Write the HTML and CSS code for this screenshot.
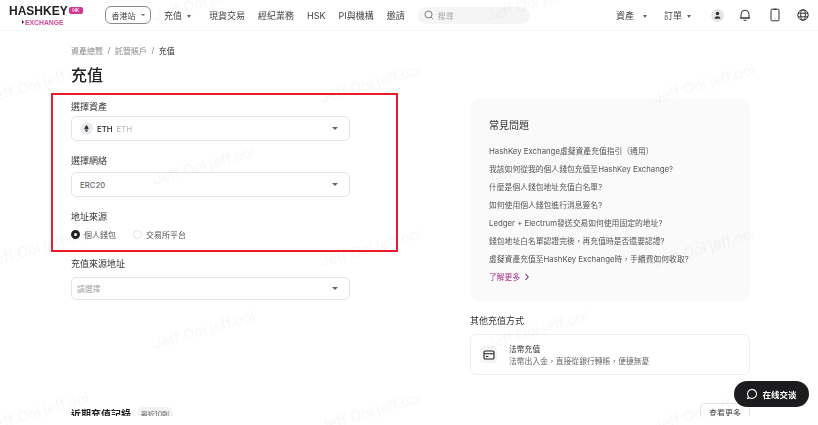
FILE: index.html
```html
<!DOCTYPE html>
<html>
<head>
  <meta charset="utf-8">
  <title>充值</title>
  <link rel="stylesheet" href="styles.css">
</head>
<body>
  <div class="page">
    <header class="topbar">
      <div class="logo">
        <div class="logo-main">HASHKEY<span class="logo-hk">HK</span></div>
        <div class="logo-sub"><span class="logo-arrow"></span>EXCHANGE</div>
      </div>
      <button class="site-btn">香港站<span class="caret caret-small"></span></button>
      <nav class="nav">
        <a class="nav-item nav-first">充值<span class="caret"></span></a>
        <a class="nav-item">現貨交易</a>
        <a class="nav-item">經紀業務</a>
        <a class="nav-item">HSK</a>
        <a class="nav-item">PI與機構</a>
        <a class="nav-item">邀請</a>
      </nav>
      <div class="search">
        <svg class="search-icon" viewBox="0 0 12 12" width="10" height="10"><circle cx="5.4" cy="5.4" r="4.2"/><path d="M8.6 8.6l2 2"/></svg>
        <span>搜尋</span>
      </div>
      <div class="top-right">
        <a class="nav-item">資產<span class="caret caret-wide"></span></a>
        <a class="nav-item nav-orders">訂單<span class="caret"></span></a>
        <span class="avatar">
          <svg viewBox="0 0 14 14" width="13" height="13"><circle cx="7" cy="4.8" r="1.9"/><path d="M3.9 10.4c0-1.7 1.4-2.5 3.1-2.5s3.1.8 3.1 2.5z"/></svg>
        </span>
        <svg class="top-icon" viewBox="0 0 14 14" width="14" height="14"><path d="M3 10V6.2a4 4 0 0 1 8 0V10zM1.9 10h10.2M5.6 12.3h2.8"/></svg>
        <svg class="top-icon" viewBox="0 0 14 14" width="14" height="14"><rect x="3" y="1.2" width="8" height="11.6" rx="1"/><path d="M5.6 1.2h2.8M6.8 10.8h.4"/></svg>
        <svg class="top-icon" viewBox="0 0 14 14" width="14" height="14"><circle cx="7" cy="7" r="5.2"/><ellipse cx="7" cy="7" rx="2.3" ry="5.2"/><path d="M2 5.2h10M2 8.8h10"/></svg>
      </div>
    </header>

    <main class="content">
      <section class="left">
        <div class="crumbs">
          <span>資產總覽</span><i>/</i><span>託管賬戶</span><i>/</i><span class="crumb-now">充值</span>
        </div>
        <h1>充值</h1>

        <div class="field field-asset">
          <label>選擇資產</label>
          <div class="select">
            <span class="coin">
              <svg viewBox="0 0 10 10" width="9" height="9"><path d="M5 .8L2.4 5 5 6.5 7.6 5zM2.6 5.8L5 9.2l2.4-3.4L5 7.2z"/></svg>
            </span>
            <span class="coin-name">ETH</span><span class="coin-sub">ETH</span>
            <span class="caret select-caret"></span>
          </div>
        </div>

        <div class="field field-network">
          <label>選擇網絡</label>
          <div class="select"><span class="select-val">ERC20</span><span class="caret select-caret"></span></div>
        </div>

        <div class="field field-source">
          <label>地址來源</label>
          <div class="radios">
            <span class="radio radio-on"></span><span class="radio-text">個人錢包</span>
            <span class="radio radio-off"></span><span class="radio-text">交易所平台</span>
          </div>
        </div>

        <div class="field field-address">
          <label>充值來源地址</label>
          <div class="select select-short"><span class="select-ph">請選擇</span><span class="caret select-caret"></span></div>
        </div>

        <div class="recent">
          <h2>近期充值記錄</h2>
          <span class="pill">最近10則</span>
        </div>
      </section>

      <aside class="right">
        <div class="faq">
          <h3>常見問題</h3>
          <ul>
            <li>HashKey Exchange虛擬資產充值指引（通用）</li>
            <li>我該如何從我的個人錢包充值至HashKey Exchange?</li>
            <li>什麼是個人錢包地址充值白名單?</li>
            <li>如何使用個人錢包進行消息簽名?</li>
            <li>Ledger + Electrum發送交易如何使用固定的地址?</li>
            <li>錢包地址白名單認證完後，再充值時是否還要認證?</li>
            <li>虛擬資產充值至HashKey Exchange時，手續費如何收取?</li>
            <li class="faq-more">了解更多
              <svg viewBox="0 0 8 10" width="6" height="8"><path d="M2 1l3.6 4L2 9"/></svg>
            </li>
          </ul>
        </div>

        <div class="other-title">其他充值方式</div>
        <div class="other-card">
          <span class="other-icon">
            <svg viewBox="0 0 14 12" width="12" height="10"><rect x="1" y="1.2" width="12" height="9.6" rx="1.6"/><path d="M1 4.4h12M3.2 7.8h3"/></svg>
          </span>
          <div class="other-text">
            <div>法幣充值</div>
            <div class="other-sub">法幣出入金，直接從銀行轉賬，便捷無憂</div>
          </div>
        </div>

        <div class="more-row"><button class="more-btn">查看更多</button></div>
      </aside>
    </main>

    <div class="red-box"></div>

    <button class="chat">
      <svg viewBox="0 0 14 14" width="12" height="12"><path d="M7 1.6a5.3 5.3 0 1 1-2.6 9.9L2 12.2l.7-2.3A5.3 5.3 0 0 1 7 1.6z"/></svg>
      在线交谈
    </button>

    <svg class="watermark" width="818" height="425">
      <defs>
        <pattern id="wm" x="100" y="30" width="333" height="164" patternUnits="userSpaceOnUse">
          <text transform="translate(55 155) rotate(-16)">Jeff Ooi jeff.ooi</text>
          <text transform="translate(222 73) rotate(-16)">Jeff Ooi jeff.ooi</text>
        </pattern>
      </defs>
      <rect width="818" height="425" fill="url(#wm)"/>
    </svg>
  </div>
</body>
</html>
```

FILE: styles.css
```css
* {
  margin: 0;
  padding: 0;
  box-sizing: border-box;
}

html, body {
  height: 425px;
  overflow: hidden;
  background: #fff;
}

body {
  font-family: Inter, "Noto Sans CJK TC", sans-serif;
  font-size: 9px;
  color: #333;
}

button {
  font-family: inherit;
  background: none;
}

/* the reference is a soft, resampled capture */
.page {
  position: relative;
  width: 818px;
  height: 425px;
  overflow: hidden;
  filter: blur(.35px);
}

/* top bar */
.topbar {
  display: flex;
  align-items: center;
  height: 31px;
  padding: 0 8px 0 9px;
  border-bottom: 1px solid #f6f6f6;
}

.logo {
  width: 74px;
  margin-top: 1px;
}

.logo-main {
  display: flex;
  align-items: flex-start;
  height: 11px;
  font-family: "Liberation Sans", sans-serif;
  font-size: 12px;
  line-height: 11px;
  font-weight: 700;
  color: #222;
}

.logo-hk {
  width: 15px;
  height: 7px;
  margin-left: 1px;
  margin-top: 1px;
  border-radius: 2px;
  background: #d0358f;
  color: #fbdcee;
  font-size: 5px;
  line-height: 7px;
  text-align: center;
}

.logo-sub {
  display: flex;
  align-items: center;
  margin-top: 2px;
  padding-left: 13px;
  font-family: "Liberation Sans", sans-serif;
  font-size: 6.8px;
  line-height: 7px;
  font-weight: 700;
  color: #d6469b;
}

.logo-arrow {
  width: 0;
  height: 0;
  margin-right: 1px;
  border-left: 2.5px solid #222;
  border-top: 2px solid transparent;
  border-bottom: 2px solid transparent;
}

.site-btn {
  display: flex;
  align-items: center;
  justify-content: center;
  width: 46px;
  height: 18px;
  margin-left: 22px;
  border: 1px solid #8a8a8a;
  border-radius: 6px;
  font-size: 8px;
  color: #444;
}

.caret {
  display: inline-block;
  width: 0;
  height: 0;
  margin-left: 5px;
  border-left: 2.5px solid transparent;
  border-right: 2.5px solid transparent;
  border-top: 3px solid #666;
  vertical-align: middle;
}

.caret-small {
  border-left-width: 2px;
  border-right-width: 2px;
  border-top-width: 2px;
}

.caret-wide {
  margin-left: 9px;
}

.nav {
  display: flex;
  align-items: center;
  margin-left: 13px;
  gap: 13px;
}

.nav-item {
  font-size: 9px;
  color: #444;
  white-space: nowrap;
}

.nav-first {
  margin-right: 5px;
}

.search {
  display: flex;
  align-items: center;
  width: 112px;
  height: 17px;
  margin-left: 13px;
  padding-left: 6px;
  gap: 4px;
  border-radius: 9px;
  background: #f5f5f5;
  color: #aaa;
  font-size: 8px;
}

.search-icon {
  fill: none;
  stroke: #666;
  stroke-width: 1;
}

.top-right {
  display: flex;
  align-items: center;
  margin-left: auto;
}

.nav-orders {
  margin-left: 17px;
}

.avatar {
  display: flex;
  align-items: center;
  justify-content: center;
  width: 13px;
  height: 13px;
  margin-left: 20px;
  border-radius: 50%;
  background: #e6e6e8;
}

.avatar svg {
  fill: #333;
}

.top-icon {
  margin-left: 14px;
  fill: none;
  stroke: #333;
  stroke-width: 1;
}

.top-icon:nth-of-type(2) {
  margin-left: 16px;
}

/* main area, the capture goes white below 416px */
.content {
  display: flex;
  height: 385px;
  overflow: hidden;
  padding-left: 71px;
  gap: 120px;
}

.left {
  width: 279px;
}

.crumbs {
  display: flex;
  align-items: center;
  height: 12px;
  margin-top: 13px;
  font-size: 8px;
  color: #888;
}

.crumbs i {
  margin: 0 4.5px;
  font-style: normal;
}

.crumb-now {
  color: #333;
}

h1 {
  margin-top: 6px;
  height: 26px;
  font-size: 16px;
  line-height: 26px;
  font-weight: 500;
  color: #222;
}

.field label {
  display: block;
  height: 13px;
  font-size: 9px;
  line-height: 13px;
  color: #333;
}

.field-asset {
  margin-top: 12px;
}

.field-network {
  margin-top: 13px;
}

.field-source {
  margin-top: 13px;
}

.field-address {
  margin-top: 17px;
}

.select {
  position: relative;
  display: flex;
  align-items: center;
  height: 25px;
  margin-top: 3px;
  padding-left: 8px;
  border: 1px solid #e4e4e4;
  border-radius: 5px;
  background: #fff;
  font-size: 7.8px;
}

.field-network .select {
  margin-top: 5px;
}

.select-short {
  height: 23px;
  margin-top: 7px;
  padding-left: 5px;
}

.select-caret {
  margin-left: auto;
  margin-right: 11px;
  border-left-width: 3px;
  border-right-width: 3px;
}

.coin {
  display: flex;
  align-items: center;
  justify-content: center;
  width: 13px;
  height: 13px;
  margin-right: 4px;
  border-radius: 50%;
  background: #ececf1;
}

.coin svg {
  fill: #333;
}

.coin-name {
  font-weight: 500;
  color: #222;
}

.coin-sub {
  margin-left: 4px;
  color: #b5b5b5;
}

.select-val {
  color: #555;
}

.select-ph {
  color: #aaa;
}

.radios {
  display: flex;
  align-items: center;
  height: 12px;
  margin-top: 5px;
  font-size: 8px;
  color: #555;
}

.radio {
  width: 9px;
  height: 9px;
  border-radius: 50%;
}

.radio-on {
  border: 3px solid #222;
  background: #fff;
}

.radio-off {
  margin-left: 17px;
  border: 1px solid #e4e4e4;
}

.radio-text {
  margin-left: 4px;
}

.recent {
  display: flex;
  align-items: center;
  margin-top: 107px;
}

h2 {
  font-size: 10px;
  line-height: 14px;
  font-weight: 700;
  color: #222;
}

.pill {
  width: 36px;
  margin-left: 6px;
  padding: 2px 0;
  border-radius: 6px;
  background: #f2f2f2;
  font-size: 7px;
  text-align: center;
  color: #666;
}

/* right column */
.right {
  width: 280px;
}

.faq {
  height: 202px;
  margin-top: 68px;
  padding: 19px 19px 0;
  border-radius: 9px;
  background: #fafafa;
}

h3 {
  font-size: 10px;
  line-height: 14px;
  font-weight: 400;
  color: #333;
}

.faq ul {
  margin-top: 10px;
  list-style: none;
}

.faq li {
  height: 18px;
  font-size: 7.8px;
  line-height: 18px;
  color: #555;
  white-space: nowrap;
}

.faq-more {
  display: flex;
  align-items: center;
  gap: 4px;
  color: #a8308c !important;
}

.faq-more svg {
  fill: none;
  stroke: #7a1f6a;
  stroke-width: 1.4;
}

.other-title {
  margin-top: 13px;
  font-size: 9px;
  line-height: 13px;
  color: #333;
}

.other-card {
  display: flex;
  align-items: center;
  height: 41px;
  margin-top: 7px;
  padding-left: 9px;
  border: 1px solid #eee;
  border-radius: 6px;
}

.other-icon {
  display: flex;
  align-items: center;
  justify-content: center;
  width: 17px;
  height: 17px;
  border-radius: 4px;
  background: #f5f5f5;
}

.other-icon svg {
  fill: none;
  stroke: #222;
  stroke-width: 1.3;
}

.other-text {
  margin-left: 12px;
  font-size: 7.8px;
  line-height: 12px;
  color: #333;
}

.other-sub {
  color: #666;
}

.more-row {
  display: flex;
  justify-content: flex-end;
  margin-top: 28px;
}

.more-btn {
  width: 50px;
  height: 18px;
  border: 1px solid #e4e4e4;
  border-radius: 4px 4px 0 0;
  font-size: 8px;
  color: #444;
}

/* things that lie over the page */
.red-box {
  position: absolute;
  left: 51px;
  top: 93px;
  width: 347px;
  height: 159px;
  border: 2px solid #ea1c2c;
}

.chat {
  position: absolute;
  left: 734px;
  top: 381px;
  display: flex;
  align-items: center;
  justify-content: center;
  gap: 4px;
  width: 75px;
  height: 26px;
  border: none;
  border-radius: 13px;
  background: #1c1c1e;
  color: #fff;
  font-size: 8.5px;
  font-weight: 700;
}

.chat svg {
  fill: none;
  stroke: #fff;
  stroke-width: 1.3;
}

.watermark {
  position: absolute;
  left: 0;
  top: 0;
  pointer-events: none;
}

.watermark text {
  font-family: Inter, sans-serif;
  font-size: 14.5px;
  fill: rgba(120, 100, 90, .055);
}
```
